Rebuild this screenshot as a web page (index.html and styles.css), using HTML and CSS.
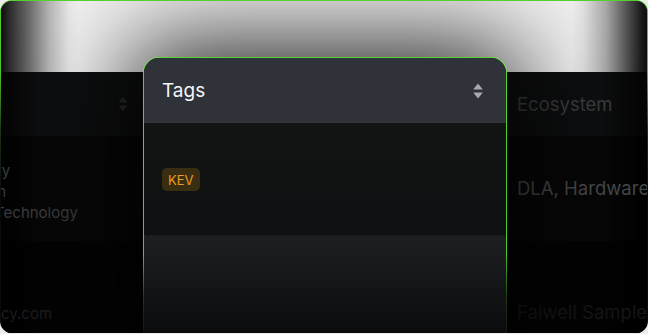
FILE: index.html
```html
<!DOCTYPE html>
<html>
<head>
<meta charset="utf-8">
<link rel="stylesheet" href="styles.css">
</head>
<body>
<div class="frame">
  <div class="inner">
    <div class="glow"></div>
    <div class="table">
      <div class="cell head c1">
        <svg class="sort dim" width="10" height="16" viewBox="0 0 10 16"><path d="M5 1 L9.5 6.5 H0.5 Z M5 15 L9.5 9.5 H0.5 Z" fill="currentColor"/></svg>
      </div>
      <div class="cell head c2"></div>
      <div class="cell head c3"><span class="hd">Ecosystem</span></div>

      <div class="cell r1 c1"><div class="shift">Cybersecurity<br>Data Platform<br>Information Technology</div></div>
      <div class="cell r1 c2"></div>
      <div class="cell r1 c3"><span class="txt1">DLA, Hardware</span></div>

      <div class="cell r2 c1"><div class="shift dimmer">nationalagency.com</div></div>
      <div class="cell r2 c2"></div>
      <div class="cell r2 c3"><span class="txt2">Falwell Sample</span></div>
    </div>

    <div class="card">
      <div class="card-in">
        <div class="card-head">
          <span class="title">Tags</span>
          <svg class="sort" width="10" height="16" viewBox="0 0 10 16"><path d="M5 0.5 L9.8 6.5 H0.2 Z M5 15.5 L9.8 9.5 H0.2 Z" fill="currentColor"/></svg>
        </div>
        <div class="card-body">
          <span class="badge">KEV</span>
        </div>
        <div class="card-foot"></div>
      </div>
    </div>
  </div>
</div>
</body>
</html>
```
FILE: styles.css
```css
* { box-sizing: border-box; }
html, body { margin: 0; padding: 0; }
body {
  background: #ececec;
  font-family: "Inter", "Noto Sans", sans-serif;
  width: 648px;
  height: 334px;
  overflow: hidden;
}
.frame {
  width: 648px;
  height: 333px;
  border-radius: 12px;
  padding: 1px 1px 0 1px;
  background: linear-gradient(to bottom, #54d12c 0, #4cc52a 22%, #1c2e16 40%, #0a0a0a 60%, #0a0a0a 100%);
}
.inner {
  position: relative;
  width: 100%;
  height: 100%;
  border-radius: 11px;
  overflow: hidden;
  background: #050505;
  display: flex;
  flex-direction: column;
}
.glow {
  height: 71px;
  flex: none;
  background: linear-gradient(to right, #0c0c0c 0, #2a2a2a 8px, #6a6a6a 28px, #b5b5b5 48px, #eaeaea 68px, #f3f3f3 78px, #f3f3f3 570px, #e4e4e4 582px, #a8a8a8 605px, #555 625px, #1c1c1c 640px, #0c0c0c 646px);
}
.table {
  flex: 1;
  display: grid;
  grid-template-columns: 142px 358px 1fr;
  grid-template-rows: 64px 105px 150px;
  background: linear-gradient(to right, #020202 0, #0b0c0d 40px, #0b0c0d 600px, #020202 646px);
}
.cell {
  display: flex;
  align-items: center;
  font-size: 15px;
  line-height: 21px;
  overflow: hidden;
  white-space: nowrap;
}
.head { background: rgba(255,255,255,0.012); }
.r1 { background: rgba(0,0,0,0.35); }
.r1.c1 { padding-top: 6px; }
.r2 { background: rgba(0,0,0,0.7); align-items: flex-start; padding-top: 62px; }
.c1 { justify-content: flex-end; padding-right: 15px; }
.r1.c1, .r2.c1 { justify-content: flex-start; padding-right: 0; }
.c3 { padding-left: 16px; }
.hd {
  font-size: 18.5px;
  color: #3a3d40;
}
.sort { color: #a6a9ae; display: block; }
.sort.dim { color: #26282a; }
.shift {
  margin-left: -91px;
  color: #3a3c3f;
}
.shift.dimmer { color: #1d1e20; }
.txt1 { color: #45484b; font-size: 18.5px; }
.txt2 { color: #151618; font-size: 18.5px; margin-top: -1px; }

.card {
  position: absolute;
  left: 142px;
  top: 56px;
  width: 364px;
  height: 300px;
  border-radius: 16px 16px 0 0;
  padding: 1px 1px 0 1px;
  background: linear-gradient(to bottom, #55d52d 0, #4fcc2b 65%, #1d3a16 80%, #0c0c0c 95%);
  box-shadow: 0 0 100px 15px rgba(0,0,0,0.85);
  z-index: 2;
}
.card-in {
  height: 100%;
  border-radius: 15px 15px 0 0;
  overflow: hidden;
  display: flex;
  flex-direction: column;
  background: #0a0b0b;
}
.card-head {
  height: 65px;
  flex: none;
  background: #2f3239;
  display: flex;
  align-items: center;
  justify-content: space-between;
  padding: 0 23px 0 18px;
}
.title {
  color: #f4f5f6;
  font-size: 19px;
  font-weight: 400;
}
.card-body {
  height: 112px;
  flex: none;
  background: linear-gradient(to bottom, #131515, #0f1011);
  padding: 45px 0 0 18px;
}
.badge {
  display: inline-flex;
  align-items: center;
  height: 23px;
  padding: 0 6px;
  border-radius: 5px;
  background: #3a2e12;
  color: #ec9d1e;
  font-size: 13px;
}
.card-foot {
  flex: 1;
  background: linear-gradient(to bottom, #1d1f23 0, #16171a 40px, #0a0b0c 100px);
  border-top: 1px dotted #26282c;
}
```
